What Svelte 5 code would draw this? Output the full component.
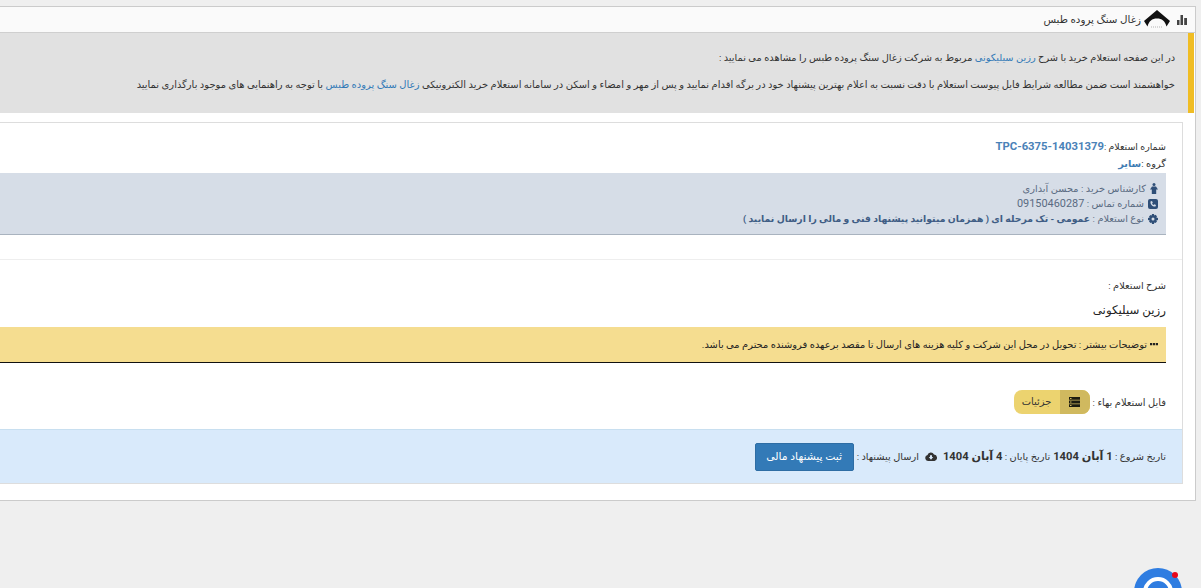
<script>
  // استعلام details, static data
  const info = {
    code: "TPC-6375-14031379",
    group: "سایر",
    buyer: "محسن آبداری",
    phone: "09150460287",
    type: "عمومی - تک مرحله ای ( همزمان میتوانید پیشنهاد فنی و مالی را ارسال نمایید )"
  };
</script>

<div class="page" dir="rtl">
  <div class="portlet">
    <header class="title-bar">
      <svg class="bars" width="10" height="10" viewBox="0 0 10 10"><path d="M0 5h2.500v5H0zM3.500 0H6v10H3.500zM7.200 3H10v7H7.200z" fill="#444" /></svg>
      <svg class="logo" width="26" height="20" viewBox="0 0 26 20"><path d="M0 12 13 1l13 11-3.500 5.500C21 12 18 9.500 13 9.500S5 12 3.500 17.500z" fill="#111" /><path d="M7 18h12" stroke="#ccc" stroke-width="1.500" stroke-dasharray="1 1" /></svg>
      <span>زغال سنگ پروده طبس</span>
    </header>
    <section class="intro">
      <p class="first">در این صفحه استعلام خرید با شرح <a href="#a">رزین سیلیکونی</a> مربوط به شرکت زغال سنگ پروده طبس را مشاهده می نمایید :</p>
      <p>خواهشمند است ضمن مطالعه شرایط فایل پیوست استعلام با دقت نسبت به اعلام بهترین پیشنهاد خود در برگه اقدام نمایید و پس از مهر و امضاء و اسکن در سامانه استعلام خرید الکترونیکی <a href="#a">زغال سنگ پروده طبس</a> با توجه به راهنمایی های موجود بارگذاری نمایید</p>
    </section>

    <div class="panel">
      <div class="body">
        <div class="line code-line">شماره استعلام :<b class="code">{info.code}</b></div>
        <div class="line group-line">گروه :<b class="group">{info.group}</b></div>
        <div class="contact">
          <div class="row">
            <svg width="8" height="11" viewBox="0 0 8 11"><circle cx="4" cy="1.500" r="1.500" fill="#2f4f78" /><path d="M2 3.500h4l2 3H6.200V11H1.800V6.500H0z" fill="#2f4f78" /></svg>
            <span>کارشناس خرید : {info.buyer}</span>
          </div>
          <div class="row">
            <svg width="10" height="10" viewBox="0 0 10 10"><rect width="10" height="10" rx="2" fill="#2f4f78" /><path d="M2.500 2.500 4 2l.8 1.700-.8.700c.4.800 1 1.400 1.700 1.700l.7-.8L8 6l-.5 1.500C4.500 7.800 2.200 5.500 2.500 2.500z" fill="#d6dde7" /></svg>
            <span>شماره تماس : <span class="num">{info.phone}</span></span>
          </div>
          <div class="row">
            <svg width="10" height="10" viewBox="0 0 10 10"><path d="M4 0h2l.3 1.400 1.200-.7 1.500 1.500-.7 1.200L10 4v2l-1.700.4.700 1.200-1.500 1.500-1.200-.7L6 10H4l-.3-1.600-1.200.7L1 7.600l.7-1.200L0 6V4l1.700-.4L1 2.400l1.500-1.500 1.200.7z" fill="#2f4f78" /><circle cx="5" cy="5" r="1.500" fill="#d6dde7" /></svg>
            <span>نوع استعلام : <b>{info.type}</b></span>
          </div>
        </div>

        <hr />

        <div class="desc-label">شرح استعلام :</div>
        <div class="desc">رزین سیلیکونی</div>
        <div class="note">
          <svg width="8" height="9" viewBox="0 0 8 9"><path d="M0 3h2.200v2.200H0zM2.900 3h2.200v2.200H2.900zM5.800 3H8v2.200H5.800z" fill="#222" /></svg>
          <span>توضیحات بیشتر : تحویل در محل این شرکت و کلیه هزینه های ارسال تا مقصد برعهده فروشنده محترم می باشد.</span>
        </div>

        <div class="file-row">
          <span>فایل استعلام بهاء :</span>
          <button class="details">
            <span class="ic">
              <svg width="11" height="10" viewBox="0 0 11 10"><path d="M0 0h11v2.800H0zM0 3.600h11v2.800H0zM0 7.200h11V10H0z" fill="#1c1c10" /><path d="M1 1h1.500v1H1zM1 4.500h1.500v1H1zM1 8h1.500v1H1z" fill="#d0b95f" /></svg>
            </span>
            <span class="lbl">جزئیات</span>
          </button>
        </div>
      </div>

      <footer class="foot">
        <span>تاریخ شروع : <b>1 آبان 1404</b></span>
        <span>تاریخ پایان : <b>4 آبان 1404</b></span>
        <svg class="cloud" width="12" height="9" viewBox="0 0 12 9"><path d="M3 9a3 3 0 0 1-.5-5.900A3.500 3.500 0 0 1 9 2.500 3.300 3.300 0 0 1 9.500 9z" fill="#333" /><path d="M6 7.800 3.800 5H5V3.300h2V5h1.200z" fill="#d9eafb" /></svg>
        <span>ارسال پیشنهاد :</span>
        <button class="send">ثبت پیشنهاد مالی</button>
      </footer>
    </div>
  </div>

  <svg class="chat" width="48" height="48" viewBox="0 0 48 48">
    <circle cx="24" cy="24" r="24" fill="#2f7de1" />
    <circle cx="24" cy="24" r="13" fill="none" stroke="#fff" stroke-width="4" />
    <circle cx="41" cy="7" r="3" fill="#e8081c" />
  </svg>
</div>

<style>
  :global(body) {
    margin: 0;
    background: #efefef;
  }
  .page {
    position: relative;
    width: 1201px;
    height: 588px;
    overflow: hidden;
    padding-top: 6px;
    box-sizing: border-box;
    font-family: Roboto, "DejaVu Sans", sans-serif;
    font-size: 9.800px;
    color: #333;
  }
  a {
    color: #337ab7;
    text-decoration: none;
  }
  .portlet {
    margin-right: 5px;
    width: 1400px;
    height: 495px;
    box-sizing: border-box;
    border: 1px solid #cbcbcb;
    background: #fff;
  }
  .title-bar {
    height: 26px;
    box-sizing: border-box;
    border-bottom: 1px solid #cfcfcf;
    background: #fafafa;
    display: flex;
    align-items: center;
    gap: 3px;
    padding-right: 8px;
    font-size: 10.300px;
  }
  .bars {
    margin-left: 4px;
  }
  .logo {
    margin-top: -1px;
  }
  .intro {
    height: 80px;
    margin-right: 1px;
    background: #e1e1e1;
    border-right: 6px solid #f0bd24;
    padding: 18px 13px 0 0;
    box-sizing: border-box;
    white-space: nowrap;
  }
  .intro p {
    margin: 0 0 13px;
    line-height: 14px;
    font-size: 9.940px;
  }
  .intro .first {
    font-size: 9.800px;
  }
  .panel {
    margin: 9px 12px 0 0;
    height: 362px;
    box-sizing: border-box;
    border: 1px solid #ddd;
    background: #fff;
    display: flex;
    flex-direction: column;
  }
  .body {
    flex: 1;
    padding: 17px 16px 0 0;
    white-space: nowrap;
  }
  .line {
    height: 16px;
    line-height: 14px;
  }
  .code-line {
    font-size: 9.450px;
  }
  .code {
    font-family: Roboto, sans-serif;
    font-size: 11.300px;
    color: #4a82b8;
    unicode-bidi: embed;
    direction: ltr;
  }
  .group {
    color: #3f7cb3;
  }
  .group-line {
    height: 17px;
    line-height: 15px;
  }
  .contact {
    height: 62px;
    box-sizing: border-box;
    background: #d6dde7;
    border-bottom: 1px solid #a9b3bf;
    padding: 8px 8px 0 0;
    color: #5a6b82;
  }
  .row {
    height: 15px;
    line-height: 14px;
    display: flex;
    align-items: center;
    gap: 4px;
  }
  .row b {
    color: #3f5d85;
    font-size: 9.300px;
  }
  .num {
    font-size: 10.900px;
  }
  hr {
    margin: 24px -16px 0 0;
    border: 0;
    border-top: 1px solid #eee;
  }
  .desc-label {
    margin-top: 19px;
    line-height: 14px;
  }
  .desc {
    margin-top: 8px;
    font-size: 11.800px;
    line-height: 18px;
    color: #222;
  }
  .note {
    margin-top: 8px;
    height: 36px;
    background: #f5dd90;
    border-bottom: 1px solid #111;
    display: flex;
    align-items: center;
    gap: 3px;
    padding-right: 8px;
    box-sizing: border-box;
    color: #222;
    font-size: 9.900px;
  }
  .file-row {
    margin-top: 27px;
    display: flex;
    align-items: center;
    gap: 3px;
    font-size: 9.900px;
  }
  .details {
    display: flex;
    height: 24px;
    width: 76px;
    padding: 0;
    border: 0;
    border-radius: 8px;
    overflow: hidden;
    background: #ecd36f;
    font: inherit;
    color: #333;
  }
  .ic {
    width: 30px;
    height: 24px;
    background: #d0b95f;
    display: flex;
    align-items: center;
    justify-content: center;
  }
  .lbl {
    flex: 1;
    text-align: center;
    line-height: 24px;
  }
  .foot {
    height: 54px;
    background: #d9eafb;
    border-top: 1px solid #c8dff0;
    box-sizing: border-box;
    padding-right: 16px;
    display: flex;
    align-items: center;
    gap: 3px;
    white-space: nowrap;
  }
  .foot b {
    font-size: 11.200px;
  }
  .cloud {
    margin: 0 3px;
  }
  .send {
    margin-right: 0;
    width: 99px;
    height: 28px;
    padding: 0;
    border: 1px solid #2e6da4;
    border-radius: 2px;
    background: #337ab7;
    color: #fff;
    font: inherit;
    font-size: 10.800px;
  }
  .chat {
    position: absolute;
    left: 1134px;
    top: 568px;
  }
</style>
